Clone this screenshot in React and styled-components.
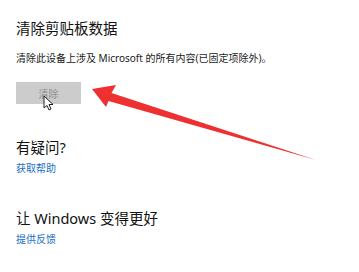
import React from 'react';
import styled, { createGlobalStyle } from 'styled-components';

const GlobalStyle = createGlobalStyle`
    html, body {
        margin: 0;
        padding: 0;
        background: #fff;
    }
    body {
        font-family: "Noto Sans", "Noto Sans CJK SC", sans-serif;
        color: #000;
    }
`;

const Page = styled.div`
    position: relative;
    width: 359px;
    height: 272px;
    overflow: hidden;
    padding: 18px 16px 0;
    box-sizing: border-box;
    display: flex;
    flex-direction: column;
    align-items: flex-start;
`;

const Heading = styled.div`
    font-size: 14.5px;
    line-height: 20px;
    color: #111;
    margin-top: ${p => p.$gap || 0}px;
    white-space: nowrap;
`;

const Desc = styled.div`
    font-size: 10px;
    line-height: 14px;
    color: #1a1a1a;
    margin-top: 13px;
    white-space: nowrap;
`;

const ClearButton = styled.div`
    position: relative;
    margin-top: 17px;
    width: 65px;
    height: 22px;
    background: #cccccc;
    color: #8f8f8f;
    font-size: 10px;
    display: flex;
    align-items: center;
    justify-content: center;
`;

const Cursor = styled.svg`
    position: absolute;
    left: 27px;
    top: 13px;
`;

const Link = styled.div`
    font-size: 10px;
    line-height: 14px;
    color: #1a6fc4;
    margin-top: 4px;
`;

const Arrow = styled.svg`
    position: absolute;
    left: 0;
    top: 0;
    pointer-events: none;
`;

export default function App() {
    return (
        <>
            <GlobalStyle />
            <Page>
                <Heading>清除剪贴板数据</Heading>
                <Desc>清除此设备上涉及 Microsoft 的所有内容(已固定项除外)。</Desc>
                <ClearButton>
                    清除
                    <Cursor width="11" height="16" viewBox="0 0 11 16">
                        <path d="M1 1 L1 13 L4 10.5 L6 15 L8 14 L6 9.5 L10 9.5 Z" fill="#fff" stroke="#222" strokeWidth="1" strokeLinejoin="round" />
                    </Cursor>
                </ClearButton>
                <Heading $gap={33}>有疑问?</Heading>
                <Link>获取帮助</Link>
                <Heading $gap={33}>让 Windows 变得更好</Heading>
                <Link>提供反馈</Link>
                <Arrow width="359" height="272" viewBox="0 0 359 272">
                    <polygon
                        points="92,89 116,85 111.5,93 316,160 108.5,101 106,107"
                        fill="#ee3030"
                    />
                </Arrow>
            </Page>
        </>
    );
}
